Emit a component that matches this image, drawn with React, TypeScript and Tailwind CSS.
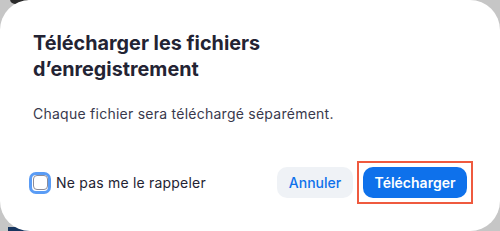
import React from "react";

export default function App() {
  return (
    <div className="relative w-[500px] h-[231px] overflow-hidden bg-[#c6c6c6]" style={{ fontFamily: "Inter, 'Noto Sans', sans-serif" }}>
      <div className="absolute left-[10px] top-[-6px] w-[18px] h-[10px] rounded-full bg-[#2a2a2a]" />
      <div className="absolute left-[8px] bottom-[-8px] w-[30px] h-[12px] bg-[#17355f]" />
      <div className="relative w-full h-full rounded-[30px] bg-white px-[33px] pt-[30px] flex flex-col">
        <h1 className="text-[19.8px] leading-[26px] font-bold text-[#232333] tracking-[0px]">
          Télécharger les fichiers
          <br />
          d’enregistrement
        </h1>
        <p className="mt-[22px] text-[14px] leading-[20px] text-[#39394d] tracking-[0.25px]">
          Chaque fichier sera téléchargé séparément.
        </p>
        <div className="mt-[37px] flex items-center">
          <label className="flex items-center -ml-[4px]">
            <span className="w-[22px] h-[22px] rounded-[7px] border-[3px] border-[#5a9cf5] flex items-center justify-center">
              <span className="w-[15px] h-[15px] rounded-[4px] border border-[#8c8c99] bg-white" />
            </span>
            <span className="ml-[5px] text-[14px] text-[#232333] tracking-[0.2px]">Ne pas me le rappeler</span>
          </label>
          <div className="ml-auto flex items-center -mr-[6px]">
            <button className="w-[76px] h-[31px] rounded-[10px] bg-[#eff2f6] text-[#0e71eb] text-[14px] font-medium">
              Annuler
            </button>
            <div className="ml-[4px] p-[4px] border-2 border-[#ef5a3f]">
              <button className="w-[104px] h-[31px] rounded-[10px] bg-[#0e71eb] text-white text-[14px] font-semibold">
                Télécharger
              </button>
            </div>
          </div>
        </div>
      </div>
    </div>
  );
}
